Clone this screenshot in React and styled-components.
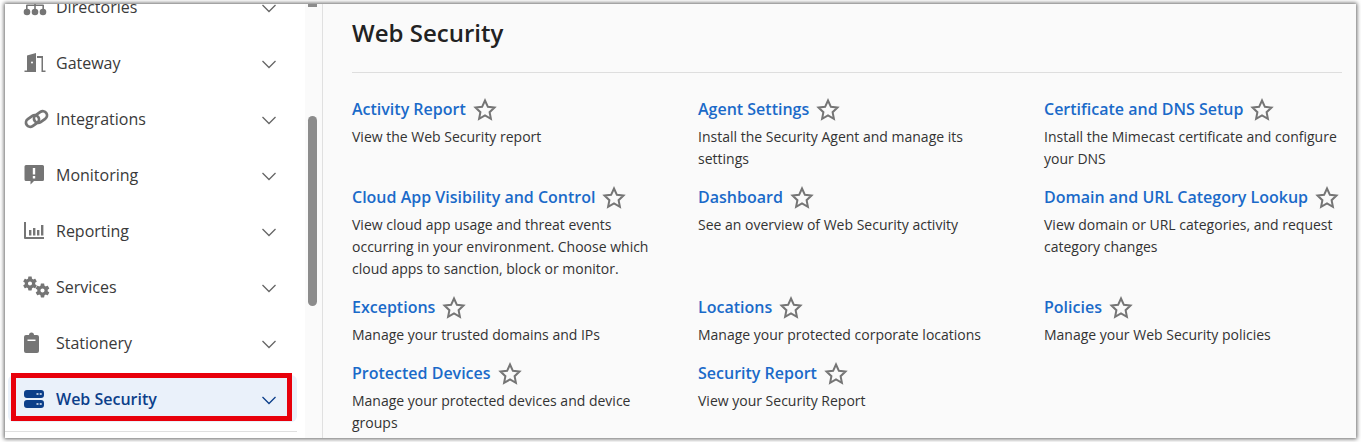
import React from "react"
import styled, { createGlobalStyle } from "styled-components"

const GlobalStyle = createGlobalStyle`
  html, body {
    margin: 0;
    padding: 0;
    background: #fff;
    font-family: "Open Sans", "Liberation Sans", sans-serif;
  }
`

const Frame = styled.div`
  display: flex;
  width: 1351px;
  height: 434px;
  margin: 4px 5px;
  overflow: hidden;
  background: #fafafa;
  box-shadow: 0 0 4px 1px rgba(0, 0, 0, 0.6);
`

const Sidebar = styled.aside`
  display: flex;
  flex-shrink: 0;
  width: 317px;
  background: #fff;
  border-right: 1px solid #e0e0e0;
`

const NavColumn = styled.nav`
  display: flex;
  flex-direction: column;
  justify-content: flex-end;
  width: 300px;
  height: 434px;
  padding: 0 8px 0 3px;
  box-sizing: border-box;
  overflow: hidden;
`

const NavRow = styled.div`
  display: flex;
  flex-shrink: 0;
  align-items: center;
  position: relative;
  height: ${(p) => (p.$active ? "47px" : "56px")};
  margin-top: ${(p) => (p.$active ? "4px" : "0")};
  padding: 0 16px;
  box-sizing: border-box;
  border-radius: 6px;
  background: ${(p) => (p.$active ? "#eaf1fa" : "transparent")};
  color: ${(p) => (p.$active ? "#0c3f8a" : "#3a3a3a")};
  font-size: 16px;
  font-weight: ${(p) => (p.$active ? 600 : 400)};
`

const NavIcon = styled.svg`
  width: 24px;
  height: 24px;
  margin-right: 8px;
  flex-shrink: 0;
  overflow: visible;
  fill: ${(p) => (p.$active ? "#0c3f8a" : "#757575")};
`

const NavLabel = styled.span`
  flex: 1;
`

const Chevron = styled.svg`
  width: 16px;
  height: 16px;
  margin-right: 4px;
  fill: none;
  stroke: ${(p) => (p.$active ? "#0c3f8a" : "#666")};
  stroke-width: 1.3;
`

const Highlight = styled.div`
  position: absolute;
  left: 3px;
  right: 5px;
  top: -2px;
  bottom: 1px;
  border: 5px solid #e8000b;
  pointer-events: none;
`

const NavFooter = styled.div`
  flex-shrink: 0;
  height: 10px;
  margin: 0 0 6px -3px;
  box-sizing: border-box;
  border-bottom: 1px solid #e0e0e0;
`

const ScrollTrack = styled.div`
  position: relative;
  flex: 1;
  background: #fafafa;
`

const ScrollThumb = styled.div`
  position: absolute;
  left: 3px;
  top: 112px;
  width: 9px;
  height: 190px;
  border-radius: 5px;
  background: #8c8c8c;
`

const ScrollTop = styled.div`
  position: absolute;
  left: 3px;
  top: 0;
  width: 9px;
  height: 3px;
  background: #8c8c8c;
`

const Main = styled.main`
  flex: 1;
  padding: 0 14px 0 29px;
  overflow: hidden;
`

const Title = styled.h1`
  margin: 0;
  height: 69px;
  box-sizing: border-box;
  padding-top: 12px;
  border-bottom: 1px solid #dedede;
  font-size: 24px;
  line-height: 34px;
  font-weight: 600;
  color: #222;
`

const Grid = styled.div`
  display: grid;
  grid-template-columns: 346px 346px 298px;
  row-gap: 13px;
  padding-top: 22px;
`

const Item = styled.div`
  min-width: 0;
`

const ItemHead = styled.div`
  display: flex;
  align-items: center;
  height: 28px;
  margin-bottom: 3px;
`

const ItemLink = styled.a`
  font-size: 16px;
  font-weight: 600;
  color: #1a6ac9;
`

const Star = styled.svg`
  width: 24px;
  height: 24px;
  margin: 2px 0 0 7px;
  fill: none;
  stroke: #757575;
  stroke-width: 2;
`

const ItemText = styled.p`
  margin: 0;
  max-width: 300px;
  font-size: 14px;
  line-height: 22px;
  color: #333;
`

const gear = "M19.14 12.94c.04-.3.06-.61.06-.94 0-.32-.02-.64-.07-.94l2.03-1.58c.18-.14.23-.41.12-.61l-1.92-3.32c-.12-.22-.37-.29-.59-.22l-2.39.96c-.5-.38-1.03-.7-1.62-.94l-.36-2.54c-.04-.24-.24-.41-.48-.41h-3.84c-.24 0-.43.17-.47.41l-.36 2.54c-.59.24-1.13.57-1.62.94l-2.39-.96c-.22-.08-.47 0-.59.22L2.74 8.87c-.12.21-.08.47.12.61l2.03 1.58c-.05.3-.09.63-.09.94s.02.64.07.94l-2.03 1.58c-.18.14-.23.41-.12.61l1.92 3.32c.12.22.37.29.59.22l2.39-.96c.5.38 1.03.7 1.62.94l.36 2.54c.05.24.24.41.48.41h3.84c.24 0 .44-.17.47-.41l.36-2.54c.59-.24 1.13-.56 1.62-.94l2.39.96c.22.08.47 0 .59-.22l1.92-3.32c.12-.22.07-.47-.12-.61l-2.01-1.58zM12 14.800c-1.540 0-2.800-1.260-2.800-2.800s1.260-2.800 2.800-2.800 2.800 1.260 2.800 2.800-1.260 2.800-2.800 2.800z"

const icons = {
  directories: (
    <>
      <path d="M10.200 4h1.600v5.500H19a1 1 0 0 1 1 1V14h-1.600v-2.900h-6.600V14h-1.600v-2.900H3.600V14H2v-3.500a1 1 0 0 1 1-1h7.200z" />
      <circle cx="3" cy="17" r="3.300" />
      <circle cx="11" cy="17" r="3.300" />
      <circle cx="19" cy="17" r="3.300" />
    </>
  ),
  gateway: (
    <path fillRule="evenodd" d="M3 4.500 12 2v19H.5v-1.500H3zM8 10.500a1 1 0 1 0 0 2 1 1 0 0 0 0-2zM13 5h6v14.500h2.500V21h-4V7H13z" />
  ),
  integrations: (
    <g fill="none" stroke="#757575" strokeWidth="2.800">
      <rect x="1.500" y="9.800" width="14" height="8.400" rx="4.200" transform="rotate(-35 8.500 14)" />
      <rect x="9.500" y="5.800" width="14" height="8.400" rx="4.200" transform="rotate(-35 16.500 10)" />
    </g>
  ),
  monitoring: (
    <path fillRule="evenodd" d="M2 2h16.500a1.500 1.500 0 0 1 1.500 1.500v13a1.500 1.500 0 0 1-1.500 1.500H10l-3.500 3.500V18H2a1.500 1.500 0 0 1-1.500-1.500v-13A1.500 1.500 0 0 1 2 2zM8.800 5v6.500h2.400V5zM8.800 13v2.400h2.400V13z" />
  ),
  reporting: (
    <path d="M0 3h2v15h18v2H1a1 1 0 0 1-1-1zM5 11h2.400v5.500H5zM9 9h2.400v7.500H9zM13 11h2.400v5.500H13zM17 6h2.400v10.500H17z" />
  ),
  services: (
    <>
      <path d={gear} transform="translate(-2.640 -.14) scale(.72)" />
      <path d={gear} transform="translate(9.860 6.860) scale(.72)" />
    </>
  ),
  stationery: (
    <path fillRule="evenodd" d="M5 4a2.500 2.500 0 0 1 5 0h3A2 2 0 0 1 15 6v14a2 2 0 0 1-2 2H2a2 2 0 0 1-2-2V6a2 2 0 0 1 2-2zM3.500 8.500V10h8V8.500z" />
  ),
  security: (
    <path fillRule="evenodd" d="M3 3h14a3 3 0 0 1 3 3v2a3 3 0 0 1-3 3H3a3 3 0 0 1-3-3V6a3 3 0 0 1 3-3zm9.500 3.200v1.600h2V6.200zm3.200 0v1.600h2V6.200zM3 13h14a3 3 0 0 1 3 3v2a3 3 0 0 1-3 3H3a3 3 0 0 1-3-3v-2a3 3 0 0 1 3-3zm9.500 3.200v1.600h2v-1.600zm3.200 0v1.600h2v-1.600z" />
  ),
}

const navItems = [
  { label: "Directories", icon: "directories" },
  { label: "Gateway", icon: "gateway" },
  { label: "Integrations", icon: "integrations" },
  { label: "Monitoring", icon: "monitoring" },
  { label: "Reporting", icon: "reporting" },
  { label: "Services", icon: "services" },
  { label: "Stationery", icon: "stationery" },
  { label: "Web Security", icon: "security", active: true },
]

const items = [
  ["Activity Report", "View the Web Security report"],
  ["Agent Settings", "Install the Security Agent and manage its settings"],
  ["Certificate and DNS Setup", "Install the Mimecast certificate and configure your DNS"],
  ["Cloud App Visibility and Control", "View cloud app usage and threat events occurring in your environment. Choose which cloud apps to sanction, block or monitor."],
  ["Dashboard", "See an overview of Web Security activity"],
  ["Domain and URL Category Lookup", "View domain or URL categories, and request category changes"],
  ["Exceptions", "Manage your trusted domains and IPs"],
  ["Locations", "Manage your protected corporate locations"],
  ["Policies", "Manage your Web Security policies"],
  ["Protected Devices", "Manage your protected devices and device groups"],
  ["Security Report", "View your Security Report"],
]

export default function App() {
  return (
    <>
      <GlobalStyle />
      <Frame>
        <Sidebar>
          <NavColumn>
            {navItems.map((n) => (
              <NavRow key={n.label} $active={n.active}>
                <NavIcon viewBox="0 0 24 24" $active={n.active}>
                  {icons[n.icon]}
                </NavIcon>
                <NavLabel>{n.label}</NavLabel>
                <Chevron viewBox="0 0 16 16" $active={n.active}>
                  <path d="M1.500 6 8 12.500 14.500 6" />
                </Chevron>
                {n.active && <Highlight />}
              </NavRow>
            ))}
            <NavFooter />
          </NavColumn>
          <ScrollTrack>
            <ScrollTop />
            <ScrollThumb />
          </ScrollTrack>
        </Sidebar>
        <Main>
          <Title>Web Security</Title>
          <Grid>
            {items.map(([name, text]) => (
              <Item key={name}>
                <ItemHead>
                  <ItemLink>{name}</ItemLink>
                  <Star viewBox="0 0 24 24">
                    <path d="M12 2.500 14.900 8.800l6.600.8-4.900 4.600 1.300 6.600L12 17.500 6.100 20.800l1.300-6.600-4.900-4.600 6.600-.8z" />
                  </Star>
                </ItemHead>
                <ItemText>{text}</ItemText>
              </Item>
            ))}
          </Grid>
        </Main>
      </Frame>
    </>
  )
}
